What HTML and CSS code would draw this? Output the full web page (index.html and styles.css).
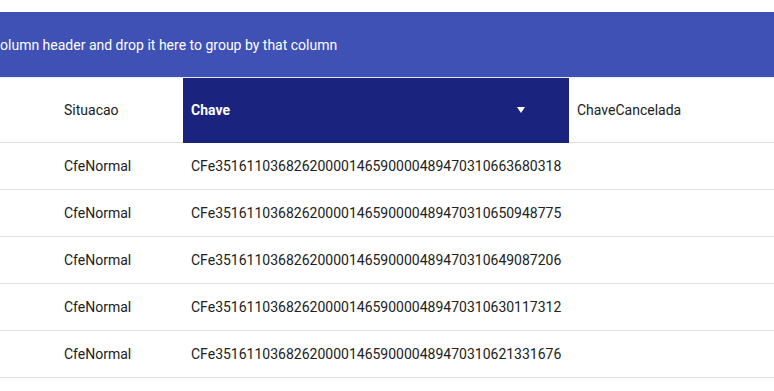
FILE: index.html
```html
<!DOCTYPE html>
<html lang="en">
<head>
    <meta charset="UTF-8">
    <title>Cupons</title>
    <link rel="stylesheet" href="styles.css">
</head>
<body>
    <div class="grid">
        <div class="group-panel">
            <span class="group-hint">Drag a column header and drop it here to group by that column</span>
        </div>
        <table class="grid-table">
            <colgroup>
                <col class="col-lead">
                <col class="col-situacao">
                <col class="col-chave">
                <col>
            </colgroup>
            <thead>
                <tr>
                    <th></th>
                    <th>Situacao</th>
                    <th class="sorted">Chave <span class="caret"></span></th>
                    <th>ChaveCancelada</th>
                </tr>
            </thead>
            <tbody>
                <tr>
                    <td></td>
                    <td>CfeNormal</td>
                    <td>CFe35161103682620000146590000489470310663680318</td>
                    <td></td>
                </tr>
                <tr>
                    <td></td>
                    <td>CfeNormal</td>
                    <td>CFe35161103682620000146590000489470310650948775</td>
                    <td></td>
                </tr>
                <tr>
                    <td></td>
                    <td>CfeNormal</td>
                    <td>CFe35161103682620000146590000489470310649087206</td>
                    <td></td>
                </tr>
                <tr>
                    <td></td>
                    <td>CfeNormal</td>
                    <td>CFe35161103682620000146590000489470310630117312</td>
                    <td></td>
                </tr>
                <tr>
                    <td></td>
                    <td>CfeNormal</td>
                    <td>CFe35161103682620000146590000489470310621331676</td>
                    <td></td>
                </tr>
            </tbody>
        </table>
    </div>
</body>
</html>
```

FILE: styles.css
```css
body {
    margin: 0;
    background: #fff;
    font-family: Roboto, "Noto Sans", sans-serif;
    font-size: 14px;
    color: #212121;
}

.grid {
    padding-top: 12px;
    overflow: hidden;
}

.group-panel {
    height: 65px;
    background: #3f51b5;
    border-bottom: 1px solid #e8eaf6;
    display: flex;
    align-items: center;
    white-space: nowrap;
    overflow: hidden;
}

.group-hint {
    color: #fff;
    margin-left: -51px;
}

.grid-table {
    border-collapse: collapse;
    table-layout: fixed;
    width: 100%;
}

.col-lead {
    width: 56px;
}

.col-situacao {
    width: 127px;
}

.col-chave {
    width: 386px;
}

.grid-table th,
.grid-table td {
    text-align: left;
    padding: 0 8px;
    white-space: nowrap;
    border-bottom: 1px solid #e0e0e0;
}

.grid-table th {
    height: 64px;
    font-weight: 400;
    color: #212121;
}

.grid-table td {
    height: 46px;
}

.grid-table th.sorted {
    background: #1a237e;
    color: #fff;
    font-weight: 700;
    border-bottom-color: #1a237e;
    position: relative;
}

.caret {
    position: absolute;
    right: 44px;
    top: 29px;
    width: 0;
    height: 0;
    border-left: 4.5px solid transparent;
    border-right: 4.5px solid transparent;
    border-top: 6px solid #fff;
}
```
